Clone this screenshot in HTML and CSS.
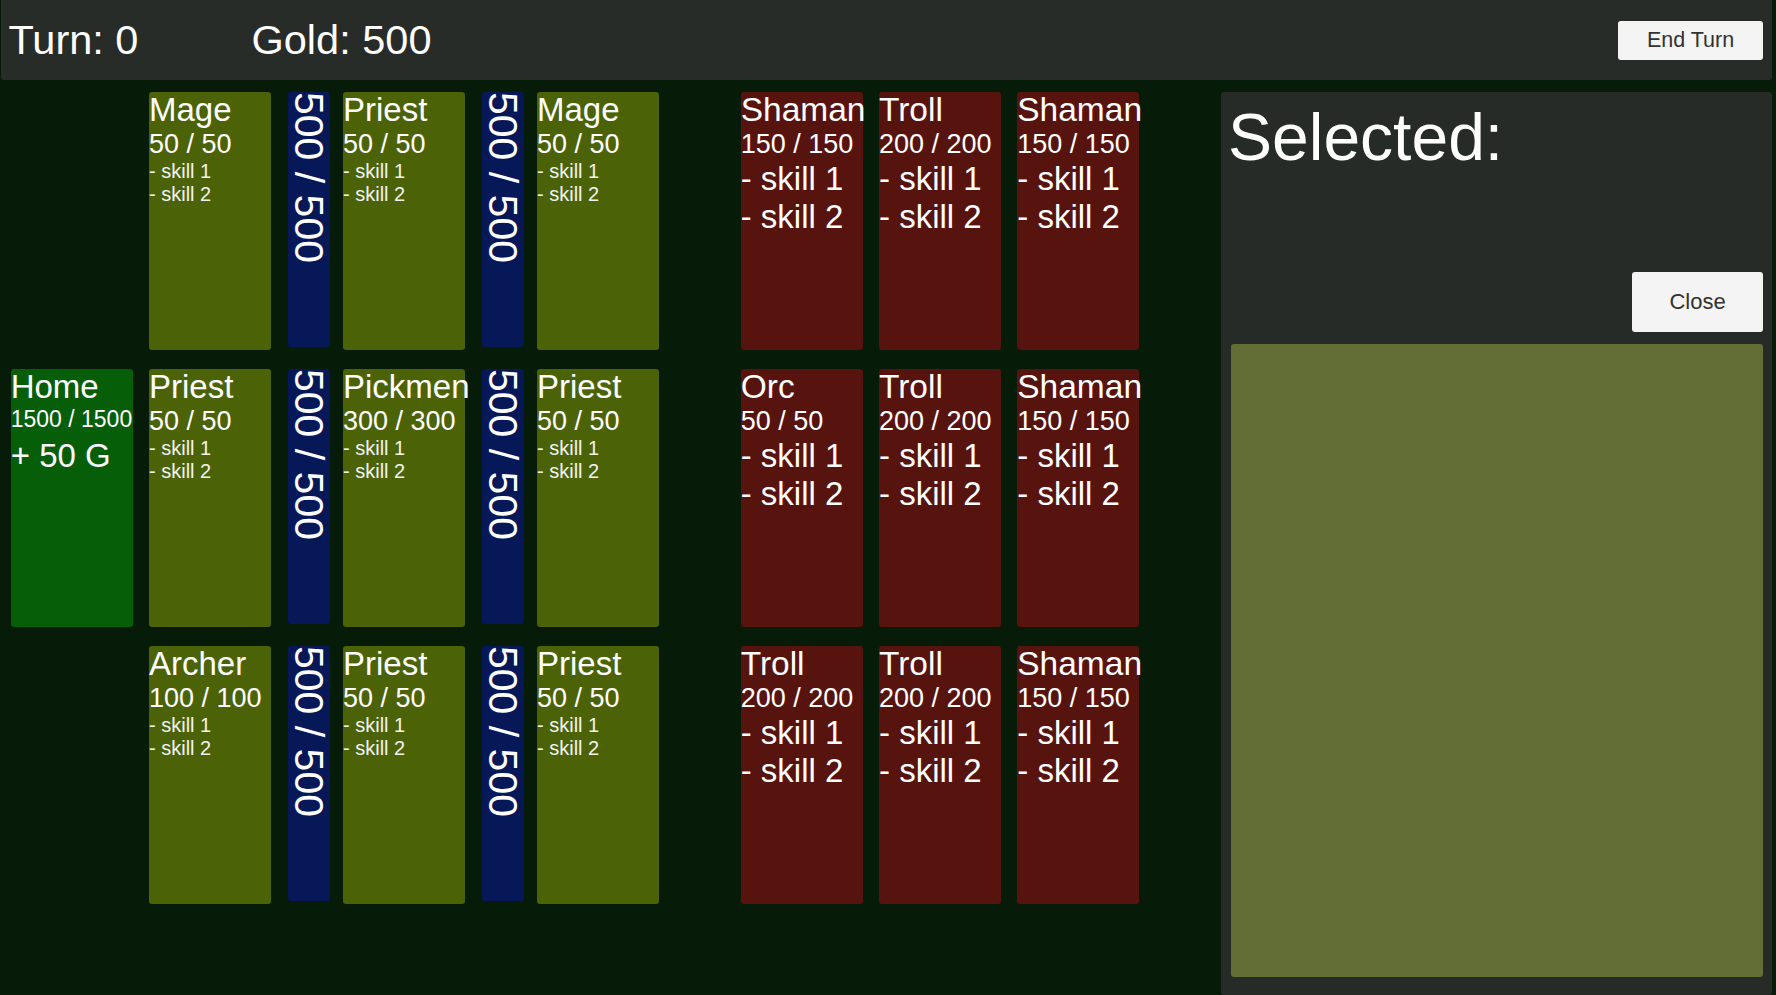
FILE: index.html
```html
<!DOCTYPE html>
<html lang="en">
<head>
<meta charset="utf-8">
<title>Board</title>
<link rel="stylesheet" href="styles.css">
</head>
<body>
<div class="app">
  <header class="topbar">
    <div class="stat turn">Turn: 0</div>
    <div class="stat gold">Gold: 500</div>
    <button class="btn end-turn">End Turn</button>
  </header>
  <main class="main">
    <section class="board">
      <div class="row">
        <div class="slot"></div>
        <div class="card ally"><div class="name">Mage</div><div class="hp">50 / 50</div><div class="skill">- skill 1</div><div class="skill">- skill 2</div></div>
        <div class="bar">500 / 500</div>
        <div class="card ally"><div class="name">Priest</div><div class="hp">50 / 50</div><div class="skill">- skill 1</div><div class="skill">- skill 2</div></div>
        <div class="bar">500 / 500</div>
        <div class="card ally"><div class="name">Mage</div><div class="hp">50 / 50</div><div class="skill">- skill 1</div><div class="skill">- skill 2</div></div>
        <div class="card enemy first"><div class="name">Shaman</div><div class="hp">150 / 150</div><div class="skill">- skill 1</div><div class="skill">- skill 2</div></div>
        <div class="card enemy"><div class="name">Troll</div><div class="hp">200 / 200</div><div class="skill">- skill 1</div><div class="skill">- skill 2</div></div>
        <div class="card enemy"><div class="name">Shaman</div><div class="hp">150 / 150</div><div class="skill">- skill 1</div><div class="skill">- skill 2</div></div>
      </div>
      <div class="row">
        <div class="card home"><div class="name">Home</div><div class="hp">1500 / 1500</div><div class="income">+ 50 G</div></div>
        <div class="card ally"><div class="name">Priest</div><div class="hp">50 / 50</div><div class="skill">- skill 1</div><div class="skill">- skill 2</div></div>
        <div class="bar">500 / 500</div>
        <div class="card ally"><div class="name">Pickmen</div><div class="hp">300 / 300</div><div class="skill">- skill 1</div><div class="skill">- skill 2</div></div>
        <div class="bar">500 / 500</div>
        <div class="card ally"><div class="name">Priest</div><div class="hp">50 / 50</div><div class="skill">- skill 1</div><div class="skill">- skill 2</div></div>
        <div class="card enemy first"><div class="name">Orc</div><div class="hp">50 / 50</div><div class="skill">- skill 1</div><div class="skill">- skill 2</div></div>
        <div class="card enemy"><div class="name">Troll</div><div class="hp">200 / 200</div><div class="skill">- skill 1</div><div class="skill">- skill 2</div></div>
        <div class="card enemy"><div class="name">Shaman</div><div class="hp">150 / 150</div><div class="skill">- skill 1</div><div class="skill">- skill 2</div></div>
      </div>
      <div class="row">
        <div class="slot"></div>
        <div class="card ally"><div class="name">Archer</div><div class="hp">100 / 100</div><div class="skill">- skill 1</div><div class="skill">- skill 2</div></div>
        <div class="bar">500 / 500</div>
        <div class="card ally"><div class="name">Priest</div><div class="hp">50 / 50</div><div class="skill">- skill 1</div><div class="skill">- skill 2</div></div>
        <div class="bar">500 / 500</div>
        <div class="card ally"><div class="name">Priest</div><div class="hp">50 / 50</div><div class="skill">- skill 1</div><div class="skill">- skill 2</div></div>
        <div class="card enemy first"><div class="name">Troll</div><div class="hp">200 / 200</div><div class="skill">- skill 1</div><div class="skill">- skill 2</div></div>
        <div class="card enemy"><div class="name">Troll</div><div class="hp">200 / 200</div><div class="skill">- skill 1</div><div class="skill">- skill 2</div></div>
        <div class="card enemy"><div class="name">Shaman</div><div class="hp">150 / 150</div><div class="skill">- skill 1</div><div class="skill">- skill 2</div></div>
      </div>
    </section>
    <aside class="panel">
      <h1 class="panel-title">Selected:</h1>
      <button class="btn close">Close</button>
      <div class="detail"></div>
    </aside>
  </main>
</div>
</body>
</html>
```

FILE: styles.css
```css
* { box-sizing: border-box; }

html, body {
  margin: 0;
  padding: 0;
  background: #071b09;
  height: 100%;
  overflow: hidden;
}

body {
  font-family: "Liberation Sans", Arial, sans-serif;
  color: #ffffff;
}

.app {
  padding: 0 4px 0 1px;
  height: 995px;
  display: flex;
  flex-direction: column;
}

.topbar {
  height: 80px;
  flex: none;
  background: #282c29;
  border-radius: 0 0 3px 3px;
  display: flex;
  align-items: center;
  padding: 0 9px 0 7.5px;
}

.stat {
  font-size: 41.5px;
  white-space: nowrap;
}

.turn { width: 243px; }

.btn {
  font-family: "Liberation Sans", Arial, sans-serif;
  background: #f4f4f4;
  color: #323232;
  border: none;
  border-radius: 3px;
  padding: 0;
  font-size: 21.5px;
}

.end-turn {
  margin-left: auto;
  width: 145px;
  height: 39px;
}

.main {
  flex: 1;
  display: flex;
  padding-top: 12px;
}

.board {
  flex: 1;
  padding-left: 9.7px;
  display: flex;
  flex-direction: column;
  gap: 19px;
}

.row {
  display: flex;
  align-items: flex-start;
}

.slot {
  width: 122px;
  height: 258px;
  flex: none;
}

.card {
  width: 122px;
  height: 258px;
  flex: none;
  border-radius: 3px;
  white-space: nowrap;
  color: #ffffff;
  margin-left: 13px;
}

.slot + .card,
.home + .card { margin-left: 16.3px; }

.card.enemy { margin-left: 16.3px; }
.card.enemy.first { margin-left: 81.7px; }

.ally { background: #4b6306; }
.enemy { background: #57130e; }
.home { background: #065e09; margin-left: 0; }

.name { font-size: 33px; margin-top: -1px; }
.hp { font-size: 27px; }
.skill { font-size: 20px; color: #f2f2f2; }
.enemy .name { font-size: 33.5px; }
.enemy .skill { font-size: 33px; color: #ffffff; }
.home .hp { font-size: 23px; }
.income { font-size: 33px; margin-top: 4px; }

.bar {
  width: 42px;
  height: 255px;
  flex: none;
  margin-left: 17px;
  background: #061857;
  border-radius: 3px;
  writing-mode: vertical-rl;
  font-size: 41px;
  line-height: 42px;
  white-space: nowrap;
  color: #ffffff;
}

.panel {
  width: 551px;
  flex: none;
  height: 903px;
  background: #272b28;
  border-radius: 3px;
  padding: 9px 9px 18px 9.5px;
  display: flex;
  flex-direction: column;
}

.panel-title {
  margin: -2px 0 0 -2.5px;
  font-weight: normal;
  font-size: 66px;
  line-height: normal;
  color: #ffffff;
}

.close {
  align-self: flex-end;
  margin-top: 97px;
  width: 131px;
  height: 60px;
  font-size: 22px;
}

.detail {
  flex: 1;
  margin-top: 12px;
  background: #636e37;
  border-radius: 3px;
}
```
